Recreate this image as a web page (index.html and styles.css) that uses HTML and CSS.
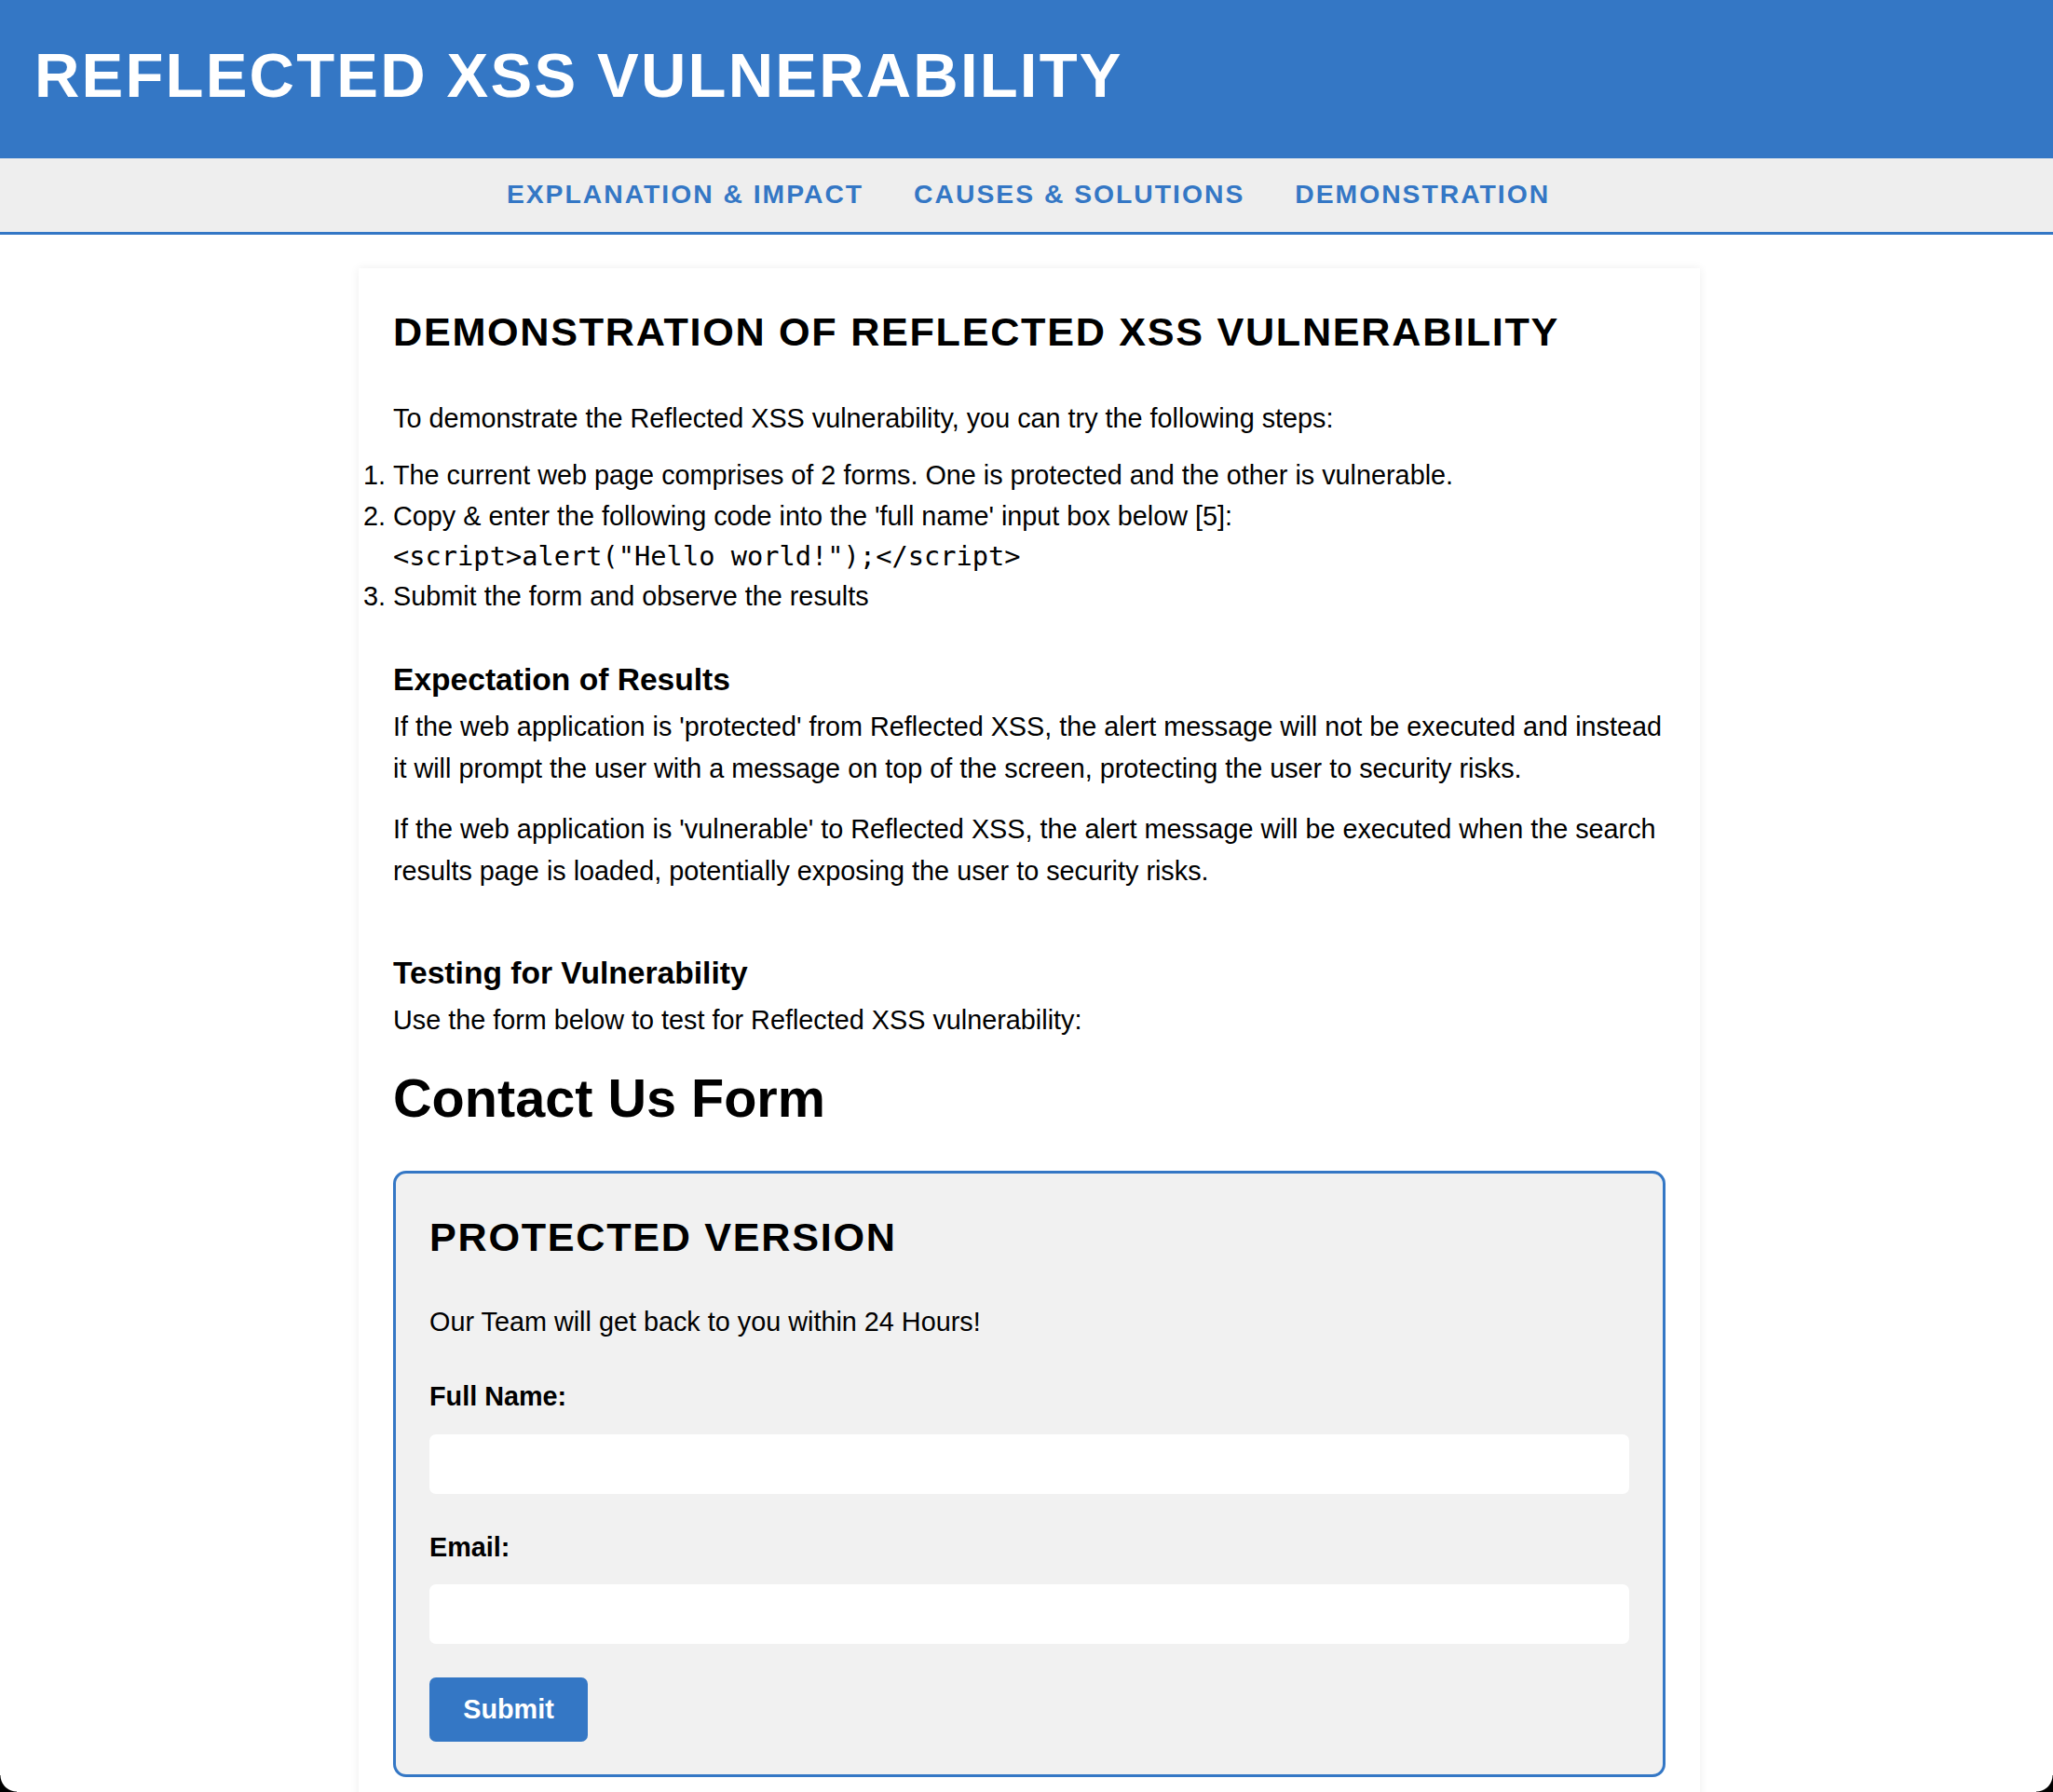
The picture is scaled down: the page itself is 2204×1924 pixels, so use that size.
FILE: index.html
```html
<!DOCTYPE html>
<html lang="en">
<head>
<meta charset="utf-8">
<title>Reflected XSS Vulnerability</title>
<link rel="stylesheet" href="styles.css">
</head>
<body>
<header class="site-header">
  <h1 class="site-title">REFLECTED XSS VULNERABILITY</h1>
</header>
<nav class="site-nav">
  <a class="nav-link" href="#explanation">EXPLANATION &amp; IMPACT</a>
  <a class="nav-link" href="#causes">CAUSES &amp; SOLUTIONS</a>
  <a class="nav-link" href="#demo">DEMONSTRATION</a>
</nav>
<main class="card" id="demo">
  <h2 class="section-title">DEMONSTRATION OF REFLECTED XSS VULNERABILITY</h2>
  <p class="intro">To demonstrate the Reflected XSS vulnerability, you can try the following steps:</p>
  <ol class="steps">
    <li>The current web page comprises of 2 forms. One is protected and the other is vulnerable.</li>
    <li>Copy &amp; enter the following code into the 'full name' input box below [5]:<br><code class="snippet">&lt;script&gt;alert("Hello world!");&lt;/script&gt;</code></li>
    <li>Submit the form and observe the results</li>
  </ol>
  <h3 class="sub-title sub-title-first">Expectation of Results</h3>
  <p class="body-text">If the web application is 'protected' from Reflected XSS, the alert message will not be executed and instead it will prompt the user with a message on top of the screen, protecting the user to security risks.</p>
  <p class="body-text body-text-next">If the web application is 'vulnerable' to Reflected XSS, the alert message will be executed when the search results page is loaded, potentially exposing the user to security risks.</p>
  <h3 class="sub-title sub-title-second">Testing for Vulnerability</h3>
  <p class="body-text">Use the form below to test for Reflected XSS vulnerability:</p>
  <h1 class="form-heading">Contact Us Form</h1>
  <form class="form-box" onsubmit="return false;">
    <h2 class="box-title">PROTECTED VERSION</h2>
    <p class="box-text">Our Team will get back to you within 24 Hours!</p>
    <label class="field-label" for="name1">Full Name:</label>
    <input class="field-input field-input-first" id="name1" type="text">
    <label class="field-label" for="email1">Email:</label>
    <input class="field-input" id="email1" type="email">
    <button class="submit-btn" type="submit">Submit</button>
  </form>
  <form class="form-box form-box-next" onsubmit="return false;">
    <h2 class="box-title">VULNERABLE VERSION</h2>
    <p class="box-text">Our Team will get back to you within 24 Hours!</p>
    <label class="field-label" for="name2">Full Name:</label>
    <input class="field-input field-input-first" id="name2" type="text">
    <label class="field-label" for="email2">Email:</label>
    <input class="field-input" id="email2" type="email">
    <button class="submit-btn" type="submit">Submit</button>
  </form>
</main>
<div class="corner corner-left"></div>
<div class="corner corner-right"></div>
</body>
</html>
```

FILE: styles.css
```css
* {
  box-sizing: border-box;
}

html, body {
  margin: 0;
  padding: 0;
  background: #ffffff;
}

body {
  font-family: "Liberation Sans", Arial, Helvetica, sans-serif;
  color: #000000;
  font-size: 28.8px;
}

.site-header {
  background: #3477c5;
  height: 170px;
  padding: 47px 0 0 37px;
}

.site-title {
  margin: 0;
  color: #ffffff;
  font-size: 67px;
  line-height: 67px;
  font-weight: bold;
  letter-spacing: 2.2px;
}

.site-nav {
  height: 82px;
  padding: 0 0 3px 4px;
  background: #eeeeee;
  border-bottom: 3px solid #3477c5;
  display: flex;
  justify-content: center;
  align-items: center;
  gap: 54px;
}

.nav-link {
  color: #3477c5;
  text-decoration: none;
  font-weight: bold;
  font-size: 28.3px;
  line-height: 28px;
  letter-spacing: 2px;
}

.card {
  width: 1440px;
  margin: 36px 0 0 calc(50% - 717px);
  padding: 44px 37px 40px 37px;
  background: #ffffff;
  box-shadow: 0 0 10px rgba(0, 0, 0, 0.07);
}

.section-title {
  margin: 0;
  font-size: 43.2px;
  line-height: 48px;
  font-weight: bold;
  letter-spacing: 1.7px;
}

.intro {
  margin: 46.5px 0 0;
  line-height: 45px;
}

.steps {
  margin: 17.6px 0 0;
  padding: 0;
  line-height: 43.4px;
}

.snippet {
  font-family: "DejaVu Sans Mono", Menlo, monospace;
  font-size: 28.7px;
}

.sub-title {
  margin: 0;
  font-size: 33.6px;
  line-height: 39px;
  font-weight: bold;
}

.sub-title-first {
  margin-top: 47px;
}

.sub-title-second {
  margin-top: 67px;
}

.body-text {
  margin: 9px 0 0;
  line-height: 45px;
}

.body-text-next {
  margin-top: 20px;
}

.form-heading {
  margin: 29.5px 0 0;
  font-size: 57.6px;
  line-height: 64px;
  font-weight: bold;
}

.form-box {
  margin: 45.5px 0 0;
  background: #f1f1f1;
  border: 3px solid #3477c5;
  border-radius: 14px;
  padding: 44px 36px 35px;
  display: flex;
  flex-direction: column;
  align-items: flex-start;
}

.form-box-next {
  margin-top: 45px;
}

.box-title {
  margin: 0;
  font-size: 43.2px;
  line-height: 48px;
  font-weight: bold;
  letter-spacing: 1.7px;
}

.box-text {
  margin: 45px 0 0;
  line-height: 45px;
}

.field-label {
  margin-top: 35px;
  font-weight: bold;
  line-height: 45px;
}

.field-input {
  align-self: stretch;
  margin-top: 17px;
  height: 64px;
  border: none;
  border-radius: 7px;
  background: #ffffff;
  font-family: inherit;
  font-size: 28px;
  padding: 0 14px;
}

.field-input-first {
  margin-top: 18px;
}

.submit-btn {
  margin-top: 36px;
  height: 69px;
  width: 170px;
  border: none;
  border-radius: 7px;
  background: #3477c5;
  color: #ffffff;
  font-family: inherit;
  font-size: 28.8px;
  font-weight: bold;
  padding: 0;
}

.corner {
  position: fixed;
  bottom: 0;
  width: 18px;
  height: 18px;
  pointer-events: none;
}

.corner-left {
  left: 0;
  background: radial-gradient(circle at 100% 0, transparent 17px, #000000 18px);
}

.corner-right {
  right: 0;
  background: radial-gradient(circle at 0 0, transparent 17px, #000000 18px);
}
```
